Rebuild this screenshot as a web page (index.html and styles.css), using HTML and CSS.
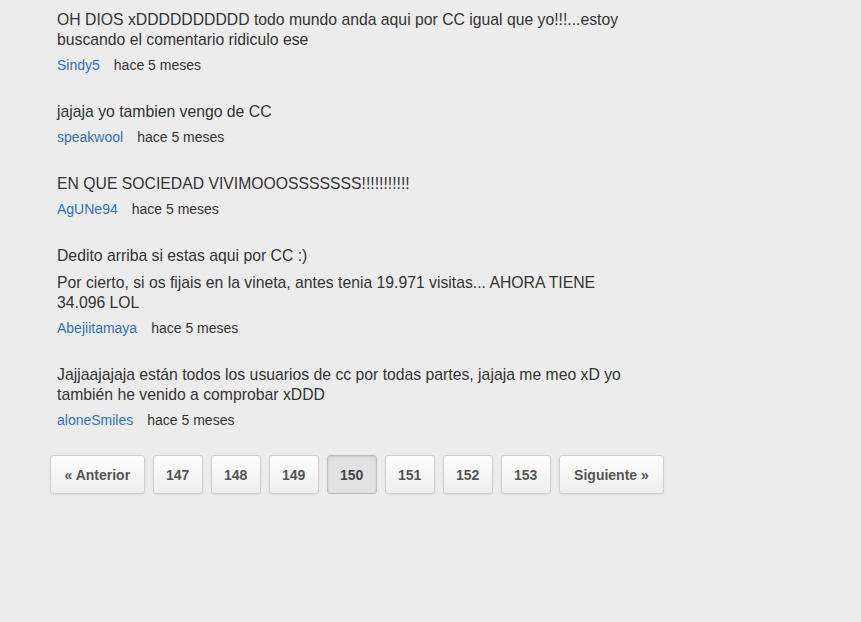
FILE: index.html
```html
<!DOCTYPE html>
<html>
<head>
<meta charset="utf-8">
<link rel="stylesheet" href="styles.css">
</head>
<body>
<div class="page">
  <ul class="comments">
    <li class="comment">
      <p>OH DIOS xDDDDDDDDDD todo mundo anda aqui por CC igual que yo!!!...estoy buscando el comentario ridiculo ese</p>
      <div class="meta"><a href="#">Sindy5</a><span class="time">hace 5 meses</span></div>
    </li>
    <li class="comment">
      <p>jajaja yo tambien vengo de CC</p>
      <div class="meta"><a href="#">speakwool</a><span class="time">hace 5 meses</span></div>
    </li>
    <li class="comment">
      <p>EN QUE SOCIEDAD VIVIMOOOSSSSSSS!!!!!!!!!!!</p>
      <div class="meta"><a href="#">AgUNe94</a><span class="time">hace 5 meses</span></div>
    </li>
    <li class="comment">
      <p>Dedito arriba si estas aqui por CC :)</p>
      <p>Por cierto, si os fijais en la vineta, antes tenia 19.971 visitas... AHORA TIENE 34.096 LOL</p>
      <div class="meta"><a href="#">Abejiitamaya</a><span class="time">hace 5 meses</span></div>
    </li>
    <li class="comment">
      <p>Jajjaajajaja están todos los usuarios de cc por todas partes, jajaja me meo xD yo también he venido a comprobar xDDD</p>
      <div class="meta"><a href="#">aloneSmiles</a><span class="time">hace 5 meses</span></div>
    </li>
  </ul>
  <nav class="pagination">
    <a class="btn prev" href="#">« Anterior</a>
    <a class="btn" href="#">147</a>
    <a class="btn" href="#">148</a>
    <a class="btn" href="#">149</a>
    <span class="btn active">150</span>
    <a class="btn" href="#">151</a>
    <a class="btn" href="#">152</a>
    <a class="btn" href="#">153</a>
    <a class="btn next" href="#">Siguiente »</a>
  </nav>
</div>
</body>
</html>
```
FILE: styles.css
```css
html, body {
  margin: 0;
  padding: 0;
  background: #ececec;
}
body {
  font-family: "Liberation Sans", Arial, sans-serif;
  color: #333;
  min-height: 622px;
}
.page {
  padding: 10px 0 0 50px;
}
.comments {
  list-style: none;
  margin: 0;
  padding: 0 0 0 7px;
  width: 575px;
}
.comment {
  margin: 0 0 28px 0;
}
.comment:last-child {
  margin-bottom: 26px;
}
.comment p {
  margin: 0 0 7px 0;
  font-size: 15.75px;
  line-height: 20px;
}
.comment p:last-of-type {
  margin-bottom: 6px;
}
.meta {
  font-size: 14px;
  line-height: 18px;
}
.meta a {
  color: #3371b8;
  text-decoration: none;
}
.meta .time {
  margin-left: 14px;
  color: #333;
}
.pagination {
  display: flex;
  gap: 8px;
}
.btn {
  box-sizing: border-box;
  display: flex;
  align-items: center;
  justify-content: center;
  height: 39px;
  width: 50px;
  border: 1px solid #cfcfcf;
  border-radius: 3px;
  background: linear-gradient(#fdfdfd, #eeeeee);
  box-shadow: 0 1px 2px rgba(0,0,0,0.08);
  color: #555;
  font-weight: bold;
  font-size: 14px;
  text-decoration: none;
}
.btn.prev {
  width: auto;
  padding: 0 13.5px;
}
.btn.next {
  width: auto;
  padding: 0 14.5px;
}
.btn.active {
  background: #e2e2e2;
  border-color: #bdbdbd;
  box-shadow: inset 0 1px 3px rgba(0,0,0,0.12);
  color: #444;
}
```
